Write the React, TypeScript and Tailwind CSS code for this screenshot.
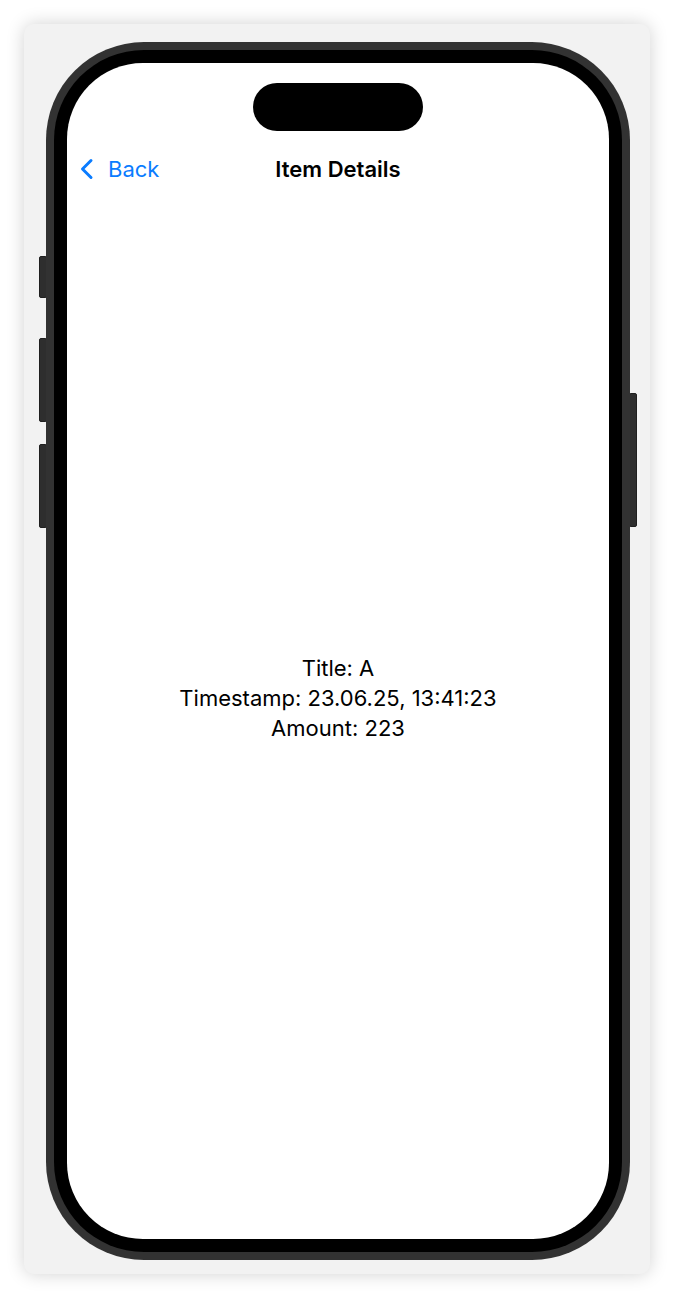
const ChevronLeft = () => (
    <svg width="17" height="22" viewBox="0 0 17 22" fill="none">
        <path d="M13 2.5 L4.5 11 L13 19.5" stroke="#0a7cff" strokeWidth="3" strokeLinecap="round" strokeLinejoin="round" />
    </svg>
)

const SideButton = ({ className }: { className: string }) => (
    <div className={`absolute bg-[#2e2e2e] border border-[#1f1f1f] rounded-[2px] ${className}`} />
)

export default function App() {
    const item = { title: "A", timestamp: "23.06.25, 13:41:23", amount: 223 }

    return (
        <div className="w-[674px] h-[1298px] bg-white pt-[24px] pl-[24px] font-['Inter','Noto_Sans',sans-serif]">
            <div className="w-[626px] h-[1250px] bg-[#f2f2f2] rounded-[10px] shadow-[0_0_18px_rgba(0,0,0,0.18)] pt-[18px] pl-[22px]">
                <div className="relative w-[584px] h-[1218px]">
                    {/* hardware buttons */}
                    <SideButton className="left-[-7px] top-[214px] w-[8px] h-[42px]" />
                    <SideButton className="left-[-7px] top-[296px] w-[8px] h-[84px]" />
                    <SideButton className="left-[-7px] top-[402px] w-[8px] h-[84px]" />
                    <SideButton className="right-[-7px] top-[351px] w-[8px] h-[134px]" />

                    <div className="relative w-full h-full rounded-[98px] bg-[#323232] p-[8px]">
                        <div className="w-full h-full rounded-[90px] bg-black p-[13px]">
                            <div className="w-full h-full rounded-[76px] bg-white flex flex-col overflow-hidden">
                                <div className="mt-[20px] mx-auto w-[170px] h-[48px] rounded-full bg-black" />

                                <div className="relative mt-[16px] h-[44px] flex items-center justify-center">
                                    <div className="absolute left-[11px] top-0 h-full flex items-center gap-[13px] text-[#0a7cff]">
                                        <ChevronLeft />
                                        <span className="text-[22px] leading-none">Back</span>
                                    </div>
                                    <span className="text-[22px] font-semibold text-black leading-none">Item Details</span>
                                </div>

                                <div className="flex-1 flex flex-col items-center justify-center pb-[34px] text-[22px] leading-[30px] text-black">
                                    <p>Title: {item.title}</p>
                                    <p>Timestamp: {item.timestamp}</p>
                                    <p>Amount: {item.amount}</p>
                                </div>
                            </div>
                        </div>
                    </div>
                </div>
            </div>
        </div>
    )
}
